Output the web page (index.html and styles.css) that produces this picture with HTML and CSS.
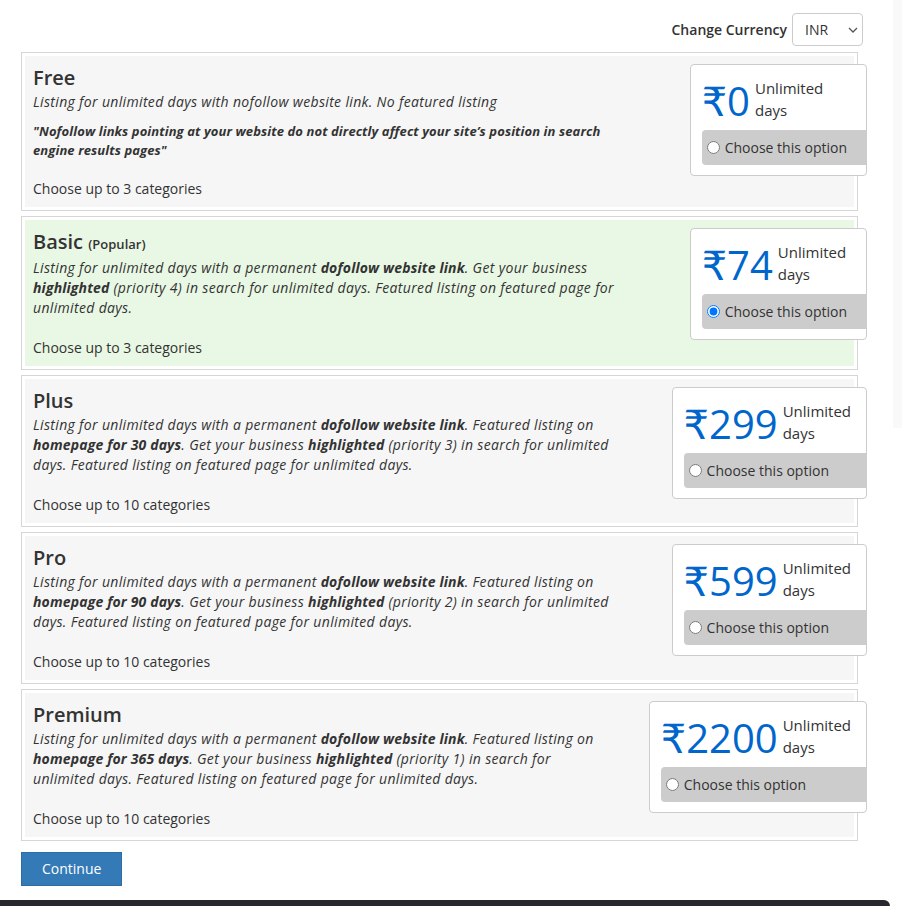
FILE: index.html
```html
<!DOCTYPE html>
<html lang="en">
<head>
    <meta charset="UTF-8">
    <meta name="viewport" content="width=device-width, initial-scale=1.0">
    <title>Choose a Listing Plan</title>
    <link rel="stylesheet" href="styles.css">
</head>
<body>
    <div class="page">
        <div class="currency-row">
            <label for="currency">Change Currency</label>
            <div class="select-wrap">
                <select id="currency">
                    <option>INR</option>
                </select>
                <svg class="chevron" width="10" height="6" viewBox="0 0 10 6"><path d="M1 1l4 4 4-4" fill="none" stroke="#555" stroke-width="1.3"/></svg>
            </div>
        </div>

        <div class="plan">
            <div class="plan-inner">
                <div class="plan-info">
                    <h4 class="plan-title">Free</h4>
                    <p class="plan-desc">Listing for unlimited days with nofollow website link. No featured listing</p>
                    <p class="plan-note">"Nofollow links pointing at your website do not directly affect your site’s position in search engine results pages"</p>
                    <p class="plan-cats">Choose up to 3 categories</p>
                </div>
                <div class="price-box">
                    <div class="price-row">
                        <span class="price">₹0</span>
                        <span class="price-term">Unlimited days</span>
                    </div>
                    <label class="choose"><input type="radio" name="plan" value="free"> Choose this option</label>
                </div>
            </div>
        </div>

        <div class="plan">
            <div class="plan-inner popular">
                <div class="plan-info">
                    <h4 class="plan-title">Basic <small>(Popular)</small></h4>
                    <p class="plan-desc">Listing for unlimited days with a permanent <b>dofollow website link</b>. Get your business <b>highlighted</b> (priority 4) in search for unlimited days. Featured listing on featured page for unlimited days.</p>
                    <p class="plan-cats">Choose up to 3 categories</p>
                </div>
                <div class="price-box">
                    <div class="price-row">
                        <span class="price">₹74</span>
                        <span class="price-term">Unlimited days</span>
                    </div>
                    <label class="choose"><input type="radio" name="plan" value="basic" checked> Choose this option</label>
                </div>
            </div>
        </div>

        <div class="plan">
            <div class="plan-inner">
                <div class="plan-info">
                    <h4 class="plan-title">Plus</h4>
                    <p class="plan-desc">Listing for unlimited days with a permanent <b>dofollow website link</b>. Featured listing on <b>homepage for 30 days</b>. Get your business <b>highlighted</b> (priority 3) in search for unlimited days. Featured listing on featured page for unlimited days.</p>
                    <p class="plan-cats">Choose up to 10 categories</p>
                </div>
                <div class="price-box">
                    <div class="price-row">
                        <span class="price">₹299</span>
                        <span class="price-term">Unlimited days</span>
                    </div>
                    <label class="choose"><input type="radio" name="plan" value="plus"> Choose this option</label>
                </div>
            </div>
        </div>

        <div class="plan">
            <div class="plan-inner">
                <div class="plan-info">
                    <h4 class="plan-title">Pro</h4>
                    <p class="plan-desc">Listing for unlimited days with a permanent <b>dofollow website link</b>. Featured listing on <b>homepage for 90 days</b>. Get your business <b>highlighted</b> (priority 2) in search for unlimited days. Featured listing on featured page for unlimited days.</p>
                    <p class="plan-cats">Choose up to 10 categories</p>
                </div>
                <div class="price-box">
                    <div class="price-row">
                        <span class="price">₹599</span>
                        <span class="price-term">Unlimited days</span>
                    </div>
                    <label class="choose"><input type="radio" name="plan" value="pro"> Choose this option</label>
                </div>
            </div>
        </div>

        <div class="plan">
            <div class="plan-inner">
                <div class="plan-info">
                    <h4 class="plan-title">Premium</h4>
                    <p class="plan-desc">Listing for unlimited days with a permanent <b>dofollow website link</b>. Featured listing on <b>homepage for 365 days</b>. Get your business <b>highlighted</b> (priority 1) in search for unlimited days. Featured listing on featured page for unlimited days.</p>
                    <p class="plan-cats">Choose up to 10 categories</p>
                </div>
                <div class="price-box">
                    <div class="price-row">
                        <span class="price">₹2200</span>
                        <span class="price-term">Unlimited days</span>
                    </div>
                    <label class="choose"><input type="radio" name="plan" value="premium"> Choose this option</label>
                </div>
            </div>
        </div>

        <button type="button" class="btn-continue">Continue</button>
    </div>
    <div class="side-strip"></div>
    <div class="footer-bar"></div>
</body>
</html>
```

FILE: styles.css
```css
body {
    margin: 0;
    font-family: "Open Sans", "DejaVu Sans", sans-serif;
    font-size: 14px;
    line-height: 20px;
    color: #333;
    background-color: #fff;
}
.page {
    width: 837px;
    padding: 13px 0 14px 21px;
}
.currency-row {
    display: flex;
    justify-content: flex-end;
    align-items: center;
    gap: 5px;
    margin-right: -5px;
    margin-bottom: 6px;
}
.currency-row label {
    font-weight: 600;
}
.select-wrap {
    position: relative;
}
.select-wrap select {
    appearance: none;
    width: 71px;
    height: 33px;
    padding: 0 0 0 12px;
    border: 1px solid #ccc;
    border-radius: 4px;
    background-color: #fff;
    font-family: inherit;
    font-size: 14px;
    color: #333;
}
.chevron {
    position: absolute;
    right: 5px;
    top: 14px;
    pointer-events: none;
}
.plan {
    border: 1px solid #d6d6d6;
    padding: 3px;
    margin-bottom: 5px;
}
.plan-inner {
    display: flex;
    justify-content: space-between;
    align-items: flex-start;
    padding: 8px;
    background-color: #f6f6f6;
}
.plan-inner.popular {
    background-color: #e9f8e4;
}
.plan-info {
    width: 581px;
}
.plan-title {
    margin: 0;
    font-size: 20px;
    line-height: 28px;
    font-weight: 600;
}
.plan-title small {
    font-size: 13px;
    font-weight: 600;
}
.plan-desc {
    margin: 0;
    font-style: italic;
    letter-spacing: 0.34px;
}
.plan-desc b {
    letter-spacing: 0.15px;
}
.plan-note {
    margin: 10px 0 0;
    font-size: 13px;
    line-height: 19px;
    font-style: italic;
    font-weight: 700;
    letter-spacing: 0.1px;
}
.plan-cats {
    margin: 20px 0 0;
}
.plan-note + .plan-cats {
    margin-top: 19px;
}
.price-box {
    flex: none;
    margin-right: -21px;
    padding: 12px 0 10px 11px;
    background-color: #fff;
    border: 1px solid #ccc;
    border-radius: 4px;
}
.price-row {
    display: flex;
    align-items: flex-start;
    padding-right: 15px;
}
.price {
    font-size: 40px;
    line-height: 48px;
    color: #0066cc;
}
.price-term {
    width: min-content;
    margin-left: 5px;
    font-size: 15px;
    line-height: 22px;
}
.choose {
    display: flex;
    align-items: center;
    height: 35px;
    margin: 5px -1px 0 0;
    padding-right: 20px;
    background-color: #ccc;
    border-radius: 4px 0 0 4px;
    font-size: 14px;
    cursor: pointer;
}
.choose input {
    width: 13px;
    height: 13px;
    margin: 0 5px 0 5px;
}
.btn-continue {
    margin-top: 6px;
    padding: 6px 20px;
    font-family: inherit;
    font-size: 14px;
    line-height: 20px;
    color: #fff;
    background-color: #337ab7;
    border: 1px solid #2e6da4;
    border-radius: 0;
    cursor: pointer;
}
.btn-continue:hover {
    background-color: #286090;
}
.side-strip {
    position: absolute;
    top: 0;
    right: 0;
    width: 9px;
    height: 428px;
    background-color: #f9f9f9;
}
.footer-bar {
    height: 20px;
    margin-right: 12px;
    background-color: #26282e;
    border-top-right-radius: 6px;
}
```
